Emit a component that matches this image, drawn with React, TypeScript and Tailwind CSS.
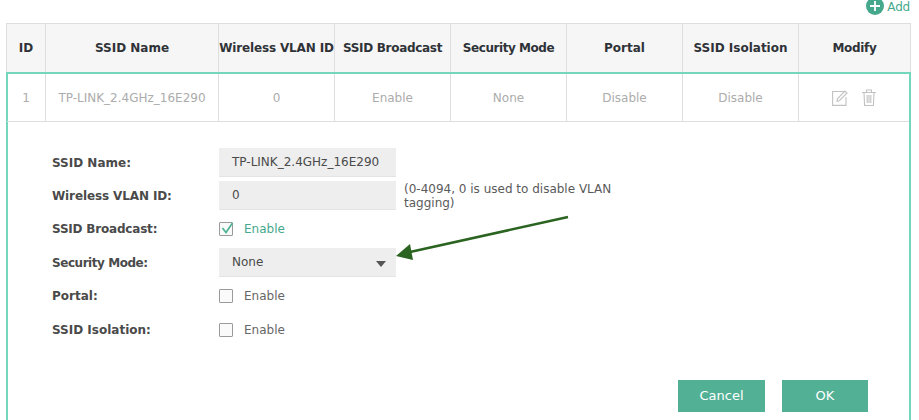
const font = "[font-family:'DejaVu_Sans',Verdana,sans-serif]"

const headers = [
  { label: 'ID', width: 'w-[39px]', tracking: '' },
  { label: 'SSID Name', width: 'w-[173px]', tracking: '' },
  { label: 'Wireless VLAN ID', width: 'w-[116px]', tracking: 'tracking-[-0.15px]' },
  { label: 'SSID Broadcast', width: 'w-[116px]', tracking: 'tracking-[-0.3px]' },
  { label: 'Security Mode', width: 'w-[116px]', tracking: 'tracking-[-0.45px]' },
  { label: 'Portal', width: 'w-[116px]', tracking: '' },
  { label: 'SSID Isolation', width: 'w-[116px]', tracking: '' },
  { label: 'Modify', width: 'flex-1', tracking: 'tracking-[-0.3px]' },
]

const cells = ['1', 'TP-LINK_2.4GHz_16E290', '0', 'Enable', 'None', 'Disable', 'Disable']

function Checkbox({ checked }: { checked?: boolean }) {
  return (
    <span className="relative w-[14px] h-[14px] border border-[#9a9a9a] rounded-[1px] bg-[#fafafa] shrink-0">
      {checked && (
        <svg viewBox="0 0 14 14" width="14" height="14" className="absolute left-0 -top-px" fill="none">
          <path d="M2.5 6 L6 10.5 L12.5 1" stroke="#4fb396" strokeWidth="1.7" />
        </svg>
      )}
    </span>
  )
}

function CheckRow({ label, checked, className, tracking = '' }: { label: string; checked?: boolean; className: string; tracking?: string }) {
  return (
    <div className={`flex items-center ${className}`}>
      <span className={`w-[167px] font-bold text-[#4a4a4a] ${tracking}`}>{label}</span>
      <Checkbox checked={checked} />
      <span className={`ml-[11px] ${checked ? 'text-[#45a88c]' : 'text-[#666]'}`}>Enable</span>
    </div>
  )
}

export default function App() {
  return (
    <div className={`relative h-[420px] w-[919px] overflow-hidden bg-white text-[12px] ${font}`}>
      {/* Add link */}
      <div className="flex h-[23px] items-start justify-end pr-[9px]">
        <div className="flex items-center gap-[3px] -mt-[2px] text-[#45a88c]">
          <svg viewBox="0 0 18 18" width="18" height="18" className="-mt-[2px]">
            <circle cx="9" cy="9" r="9" fill="#45a88c" />
            <path d="M9 4v10M4 9h10" stroke="#fff" strokeWidth="1.8" />
          </svg>
          <span className="tracking-[-0.2px]">Add</span>
        </div>
      </div>

      <div className="ml-[6px] w-[905px]">
        {/* Header row */}
        <div className="flex h-[49px] border border-b-0 border-[#dedede] bg-[#f6f6f6]">
          {headers.map((h, i) => (
            <div
              key={h.label}
              className={`${h.width} ${h.tracking} flex items-center justify-center font-bold text-[#2f3338] whitespace-nowrap ${i < 7 ? 'border-r border-[#dedede]' : ''}`}
            >
              {h.label}
            </div>
          ))}
        </div>

        {/* Selected row + edit panel */}
        <div className="h-[360px] border-2 border-b-0 border-[#74d6bd]">
          <div className="flex h-[48px] border-b border-[#dedede] -ml-[1px]">
            {cells.map((c, i) => (
              <div
                key={i}
                className={`${headers[i].width} flex items-center justify-center border-r border-[#dedede] text-[#acacac] whitespace-nowrap`}
              >
                {c}
              </div>
            ))}
            <div className="flex flex-1 items-center justify-center gap-[13px]">
              <svg viewBox="0 0 16 16" width="16" height="16" fill="none" stroke="#c2c2c2" strokeWidth="1.1">
                <path d="M12 1.5H.6v13.9h13.4V7" />
                <path d="M5 11.5l.6-3L13 1l2 2-7.4 7.5z" />
              </svg>
              <svg viewBox="0 0 16 17" width="16" height="17" fill="none" stroke="#c2c2c2" strokeWidth="1.1">
                <path d="M1 3.5h14M5.5 3.5V1h5v2.5M3 3.5l.6 13h8.8l.6-13M6.2 6v8M8 6v8M9.8 6v8" />
              </svg>
            </div>
          </div>

          <div className="pl-[44px] pt-[26px] text-[#4a4a4a]">
            <div className="flex items-center h-[29px]">
              <span className="w-[167px] font-bold">SSID Name:</span>
              <div className="flex h-[29px] w-[177px] items-center bg-[#eeeeee] pl-[13px] border-b border-[#e4e4e4]">TP-LINK_2.4GHz_16E290</div>
            </div>
            <div className="flex items-center h-[29px] mt-[4px]">
              <span className="w-[167px] font-bold tracking-[-0.12px]">Wireless VLAN ID:</span>
              <div className="flex h-[29px] w-[177px] items-center bg-[#eeeeee] pl-[13px] border-b border-[#e4e4e4]">0</div>
              <p className="ml-[8px] w-[225px] leading-[14px] text-[#5a5a5a]">(0-4094, 0 is used to disable VLAN tagging)</p>
            </div>
            <CheckRow label="SSID Broadcast:" checked className="h-[14px] mt-[12px]" tracking="tracking-[-0.2px]" />
            <div className="flex items-center h-[29px] mt-[12px]">
              <span className="w-[167px] font-bold tracking-[-0.45px]">Security Mode:</span>
              <div className="flex h-[29px] w-[177px] items-center justify-between bg-[#eeeeee] pl-[13px] pr-[10px] border-b border-[#e4e4e4]">
                None
                <span className="mt-[3px] w-0 h-0 border-x-[5px] border-x-transparent border-t-[6px] border-t-[#555]" />
              </div>
            </div>
            <CheckRow label="Portal:" className="h-[14px] mt-[12px]" />
            <CheckRow label="SSID Isolation:" className="h-[14px] mt-[20px]" />

            <div className="mt-[43px] flex gap-[17px] pl-[626px]">
              <button className="h-[32px] w-[87px] bg-[#52b095] text-[13px] text-white">Cancel</button>
              <button className="h-[32px] w-[86px] bg-[#52b095] text-[13px] text-white">OK</button>
            </div>
          </div>
        </div>
      </div>

      {/* Annotation arrow */}
      <svg className="absolute left-[390px] top-[205px]" width="190" height="60" viewBox="0 0 190 60" fill="none">
        <path d="M178 12 L20 47" stroke="#2b6420" strokeWidth="2.6" />
        <path d="M6 51 L20 39 L23 55 Z" fill="#2b6420" />
      </svg>
    </div>
  )
}
